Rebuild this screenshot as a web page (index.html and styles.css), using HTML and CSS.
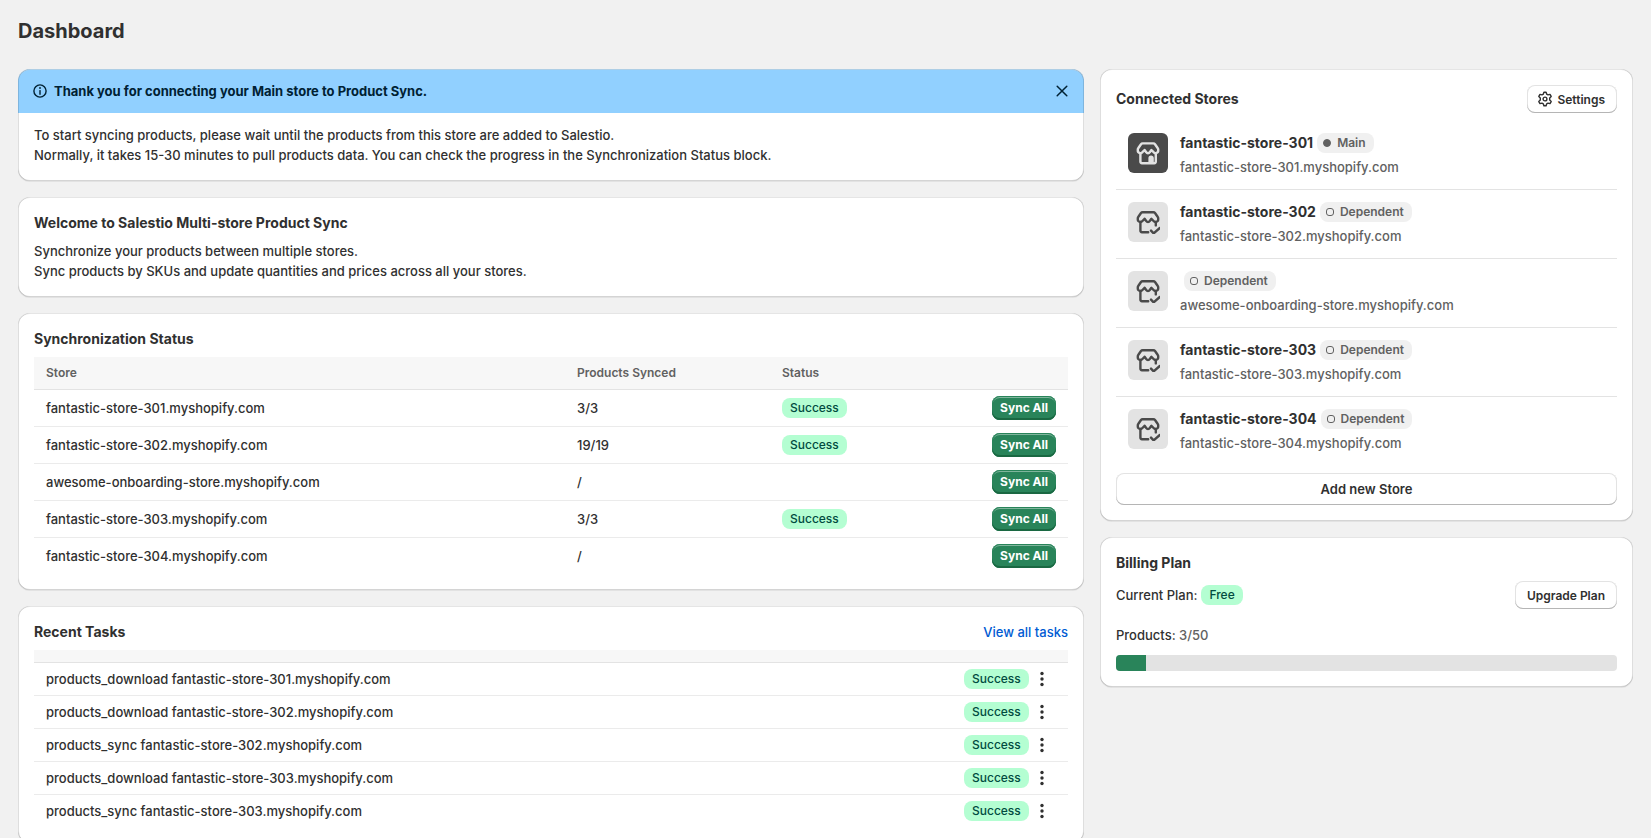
FILE: index.html
```html
<!DOCTYPE html>
<html lang="en">
<head>
    <meta charset="UTF-8">
    <meta name="viewport" content="width=device-width, initial-scale=1.0">
    <title>Dashboard</title>
    <link rel="stylesheet" href="styles.css">
</head>
<body>

<!-- Shared icons -->
<svg class="sprite" aria-hidden="true">
    <symbol id="icon-store" viewBox="0 0 24 24">
        <path d="M6.6 2.4h10.8a2 2 0 0 1 1.6.8l2.8 4a2 2 0 0 1 .4 1.2v.8a2.6 2.6 0 0 1-4.6 2L15.4 9l-1.6 2.2a2.1 2.1 0 0 1-3.6 0L8.6 9l-2.2 2.2a2.6 2.6 0 0 1-4.6-2v-.8a2 2 0 0 1 .4-1.2l2.8-4a2 2 0 0 1 1.6-.8z"/>
        <path d="M4.4 12.4v8.2a1.6 1.6 0 0 0 1.6 1.6h12.2a1.6 1.6 0 0 0 1.6-1.6v-8.2"/>
        <path fill="currentColor" d="M13.6 21.6v-4.4a1.5 1.5 0 0 1 3 0v4.4z"/>
    </symbol>
    <symbol id="icon-store-check" viewBox="0 0 24 24">
        <path d="M6.6 2.2h10.8a2 2 0 0 1 1.6.8l2.8 4a2 2 0 0 1 .4 1.2V9a2.6 2.6 0 0 1-4.6 2l-2.2-2.2-1.6 2.2a2.1 2.1 0 0 1-3.6 0L8.6 8.8 6.4 11a2.6 2.6 0 0 1-4.6-2v-.8A2 2 0 0 1 2.2 7L5 3a2 2 0 0 1 1.6-.8z"/>
        <path d="M4.4 12v8.6A1.6 1.6 0 0 0 6 22.2h6.2M19.8 12v3.4M15 20.6l2.6 2.8 6.2-5.4"/>
    </symbol>
    <symbol id="icon-dots" viewBox="0 0 20 20">
        <circle cx="10" cy="4.5" r="1.7"/>
        <circle cx="10" cy="10" r="1.7"/>
        <circle cx="10" cy="15.5" r="1.7"/>
    </symbol>
</svg>

<h1>Dashboard</h1>

<main class="layout">
    <div class="column">
        <section class="card banner">
            <div class="banner-header">
                <svg class="icon-info" viewBox="0 0 16 16" aria-hidden="true">
                    <circle cx="8" cy="8" r="6.1"/>
                    <path d="M8 7.6v3.6"/>
                    <circle class="dot" cx="8" cy="5" r=".9"/>
                </svg>
                <h2>Thank you for connecting your Main store to Product Sync.</h2>
                <button class="close" aria-label="Dismiss">
                    <svg viewBox="0 0 16 16" aria-hidden="true"><path d="M3.2 3.2l9.6 9.6M12.8 3.2l-9.6 9.6"/></svg>
                </button>
            </div>
            <div class="banner-body">
                <p>To start syncing products, please wait until the products from this store are added to Salestio.</p>
                <p>Normally, it takes 15-30 minutes to pull products data. You can check the progress in the Synchronization Status block.</p>
            </div>
        </section>

        <section class="card">
            <h2>Welcome to Salestio Multi-store Product Sync</h2>
            <div>
                <p>Synchronize your products between multiple stores.</p>
                <p>Sync products by SKUs and update quantities and prices across all your stores.</p>
            </div>
        </section>

        <section class="card">
            <h2>Synchronization Status</h2>
            <table class="sync-table">
                <thead>
                    <tr>
                        <th>Store</th>
                        <th class="col-synced">Products Synced</th>
                        <th class="col-state">Status</th>
                        <th class="col-action"></th>
                    </tr>
                </thead>
                <tbody>
                    <tr>
                        <td>fantastic-store-301.myshopify.com</td>
                        <td>3/3</td>
                        <td><span class="badge success">Success</span></td>
                        <td class="action"><button class="btn-primary">Sync All</button></td>
                    </tr>
                    <tr>
                        <td>fantastic-store-302.myshopify.com</td>
                        <td>19/19</td>
                        <td><span class="badge success">Success</span></td>
                        <td class="action"><button class="btn-primary">Sync All</button></td>
                    </tr>
                    <tr>
                        <td>awesome-onboarding-store.myshopify.com</td>
                        <td>/</td>
                        <td></td>
                        <td class="action"><button class="btn-primary">Sync All</button></td>
                    </tr>
                    <tr>
                        <td>fantastic-store-303.myshopify.com</td>
                        <td>3/3</td>
                        <td><span class="badge success">Success</span></td>
                        <td class="action"><button class="btn-primary">Sync All</button></td>
                    </tr>
                    <tr>
                        <td>fantastic-store-304.myshopify.com</td>
                        <td>/</td>
                        <td></td>
                        <td class="action"><button class="btn-primary">Sync All</button></td>
                    </tr>
                </tbody>
            </table>
        </section>

        <section class="card">
            <div class="card-header">
                <h2>Recent Tasks</h2>
                <a href="#">View all tasks</a>
            </div>
            <table class="task-table">
                <thead>
                    <tr>
                        <th></th>
                        <th class="col-status"></th>
                        <th class="col-menu"></th>
                    </tr>
                </thead>
                <tbody>
                    <tr>
                        <td>products_download fantastic-store-301.myshopify.com</td>
                        <td><span class="badge success">Success</span></td>
                        <td><button class="menu" aria-label="Task actions"><svg><use href="#icon-dots"/></svg></button></td>
                    </tr>
                    <tr>
                        <td>products_download fantastic-store-302.myshopify.com</td>
                        <td><span class="badge success">Success</span></td>
                        <td><button class="menu" aria-label="Task actions"><svg><use href="#icon-dots"/></svg></button></td>
                    </tr>
                    <tr>
                        <td>products_sync fantastic-store-302.myshopify.com</td>
                        <td><span class="badge success">Success</span></td>
                        <td><button class="menu" aria-label="Task actions"><svg><use href="#icon-dots"/></svg></button></td>
                    </tr>
                    <tr>
                        <td>products_download fantastic-store-303.myshopify.com</td>
                        <td><span class="badge success">Success</span></td>
                        <td><button class="menu" aria-label="Task actions"><svg><use href="#icon-dots"/></svg></button></td>
                    </tr>
                    <tr>
                        <td>products_sync fantastic-store-303.myshopify.com</td>
                        <td><span class="badge success">Success</span></td>
                        <td><button class="menu" aria-label="Task actions"><svg><use href="#icon-dots"/></svg></button></td>
                    </tr>
                </tbody>
            </table>
        </section>
    </div>

    <div class="column">
        <section class="card">
            <div class="card-header">
                <h2>Connected Stores</h2>
                <button class="btn btn-icon">
                    <svg class="icon-gear" viewBox="0 0 16 16" aria-hidden="true">
                        <path d="M6.9 1.2h2.2l.6 2 1.3.7 2-.5 1.2 2-1.5 1.5v2.2l1.5 1.5-1.2 2-2-.5-1.3.7-.6 2H6.9l-.6-2-1.3-.7-2 .5-1.2-2 1.5-1.5V6.9L1.8 5.4l1.2-2 2 .5 1.3-.7z"/>
                        <circle cx="8" cy="8" r="1.9"/>
                    </svg>
                    Settings
                </button>
            </div>
            <ul class="stores">
                <li>
                    <span class="thumb main"><svg><use href="#icon-store"/></svg></span>
                    <div class="store-info">
                        <div class="store-name"><strong>fantastic-store-301</strong><span class="badge role"><i class="pip full"></i>Main</span></div>
                        <p>fantastic-store-301.myshopify.com</p>
                    </div>
                </li>
                <li>
                    <span class="thumb"><svg><use href="#icon-store-check"/></svg></span>
                    <div class="store-info">
                        <div class="store-name"><strong>fantastic-store-302</strong><span class="badge role"><i class="pip"></i>Dependent</span></div>
                        <p>fantastic-store-302.myshopify.com</p>
                    </div>
                </li>
                <li>
                    <span class="thumb"><svg><use href="#icon-store-check"/></svg></span>
                    <div class="store-info">
                        <div class="store-name"><strong></strong><span class="badge role"><i class="pip"></i>Dependent</span></div>
                        <p>awesome-onboarding-store.myshopify.com</p>
                    </div>
                </li>
                <li>
                    <span class="thumb"><svg><use href="#icon-store-check"/></svg></span>
                    <div class="store-info">
                        <div class="store-name"><strong>fantastic-store-303</strong><span class="badge role"><i class="pip"></i>Dependent</span></div>
                        <p>fantastic-store-303.myshopify.com</p>
                    </div>
                </li>
                <li>
                    <span class="thumb"><svg><use href="#icon-store-check"/></svg></span>
                    <div class="store-info">
                        <div class="store-name"><strong>fantastic-store-304</strong><span class="badge role"><i class="pip"></i>Dependent</span></div>
                        <p>fantastic-store-304.myshopify.com</p>
                    </div>
                </li>
            </ul>
            <button class="btn btn-wide">Add new Store</button>
        </section>

        <section class="card">
            <h2>Billing Plan</h2>
            <div class="card-header">
                <p class="plan">Current Plan: <span class="badge success">Free</span></p>
                <button class="btn">Upgrade Plan</button>
            </div>
            <div class="usage">
                <p>Products: <span class="subdued">3/50</span></p>
                <div class="progress" role="progressbar" aria-label="Products" aria-valuenow="3" aria-valuemax="50">
                    <div class="progress-fill" style="width: 6%"></div>
                </div>
            </div>
        </section>
    </div>
</main>

</body>
</html>
```
FILE: styles.css
```css
* {
    box-sizing: border-box;
}

body {
    margin: 0;
    padding: 19px 18px;
    background-color: #f1f1f1;
    color: #303030;
    font-family: Inter, "Liberation Sans", sans-serif;
    font-size: 13px;
    font-weight: 450;
    line-height: 20px;
}

h1, h2, p, ul {
    margin: 0;
    padding: 0;
}

h1 {
    margin-bottom: 26px;
    font-size: 20px;
    font-weight: 650;
    line-height: 24px;
}

h2 {
    font-size: 14px;
    font-weight: 700;
}

a {
    color: #005bd3;
    text-decoration: none;
}

button {
    padding: 0;
    border: none;
    background: none;
    color: inherit;
    font-family: inherit;
    cursor: pointer;
}

svg {
    display: block;
    fill: none;
    stroke: currentColor;
    stroke-linecap: round;
    stroke-linejoin: round;
}

.sprite {
    position: absolute;
    width: 0;
    height: 0;
}

.layout {
    display: grid;
    grid-template-columns: 2fr 1fr;
    gap: 16px;
    align-items: start;
}

.column {
    display: flex;
    flex-direction: column;
    gap: 16px;
}

/* Cards */
.card {
    display: flex;
    flex-direction: column;
    gap: 8px;
    position: relative;
    padding: 16px;
    border-radius: 12px;
    background-color: #fff;
    box-shadow: 0 1px 0 rgba(26, 26, 26, 0.07);
}

/* Bevel drawn over the card's own edge */
.card::after {
    content: "";
    position: absolute;
    inset: 0;
    border-radius: 12px;
    box-shadow: inset 1px 0 0 rgba(0, 0, 0, 0.13), inset -1px 0 0 rgba(0, 0, 0, 0.13),
        inset 0 -1px 0 rgba(0, 0, 0, 0.17), inset 0 1px 0 rgba(204, 204, 204, 0.5);
    pointer-events: none;
}

.card-header {
    display: flex;
    justify-content: space-between;
    align-items: center;
}

/* Banner */
.banner {
    gap: 0;
    padding: 0;
}

.banner-header {
    display: flex;
    align-items: center;
    gap: 4px;
    padding: 12px;
    border-radius: 12px 12px 0 0;
    background-color: #91d0ff;
    color: #002133;
}

.banner-header h2 {
    flex: 1;
    font-size: 13px;
    font-weight: 650;
}

.icon-info {
    width: 20px;
    height: 16px;
    stroke-width: 1.4;
}

.icon-info .dot {
    fill: currentColor;
    stroke: none;
}

.close {
    width: 20px;
    padding: 2px;
}

.close svg {
    width: 16px;
    height: 16px;
    stroke-width: 1.5;
}

.banner-body {
    padding: 12px 16px 16px;
}

/* Tables */
table {
    width: 100%;
    border-collapse: separate;
    border-spacing: 0;
    table-layout: fixed;
}

th {
    padding: 6px 12px;
    border-bottom: 1px solid #e3e3e3;
    background-color: #f7f7f7;
    color: #616161;
    font-size: 12px;
    font-weight: 600;
    text-align: left;
}

td {
    padding: 6px 12px;
    border-bottom: 1px solid #ebebeb;
}

.sync-table th {
    height: 33px;
}

.sync-table td {
    height: 37px;
}

.sync-table tr:last-child td {
    height: 36px;
}

.sync-table .col-synced {
    width: 205px;
}

.sync-table .col-state {
    width: 210px;
}

.sync-table .col-action {
    width: 88px;
}

.action .btn-primary {
    margin-left: auto;
}

.task-table th {
    height: 13px;
}

.task-table td {
    height: 33px;
}

.task-table .col-status {
    width: 76px;
}

.task-table .col-menu {
    width: 40px;
}

.task-table td:nth-child(2) {
    padding-right: 0;
}

/* padding of both cells adds up to the gap before the dots */
.task-table td:nth-child(2) {
    padding-left: 12px;
}

.task-table td:last-child {
    padding: 6px 0 6px 4px;
}

.task-table tr:last-child td {
    height: 32px;
}

tbody tr:last-child td {
    border-bottom: none;
}

.menu {
    display: block;
}

.menu svg {
    width: 20px;
    height: 20px;
    fill: #303030;
    stroke: none;
}

/* Badges */
.badge {
    display: flex;
    align-items: center;
    width: max-content;
    height: 20px;
    padding: 0 8px;
    border-radius: 8px;
    background-color: #f0f0f0;
    color: #616161;
    font-size: 12px;
    font-weight: 600;
}

.badge.success {
    background-color: #b4fed2;
    color: #014b40;
    font-weight: 450;
}

.badge.role {
    padding-left: 6px;
}

.pip {
    width: 8px;
    height: 8px;
    margin-right: 6px;
    border: 1px solid #616161;
    border-radius: 3px;
}

.pip.full {
    border-radius: 4px;
    background-color: #616161;
}

/* Buttons */
.btn {
    display: flex;
    justify-content: center;
    align-items: center;
    gap: 4px;
    height: 28px;
    padding: 0 12px;
    border-radius: 8px;
    background-color: #fff;
    box-shadow: inset 0 -1px 0 #b5b5b5, inset 0 0 0 1px #e3e3e3;
    font-size: 12px;
    font-weight: 600;
}

.btn-icon {
    padding-left: 10px;
}

.btn-wide {
    height: 32px;
    width: 100%;
    font-size: 13px;
}

.btn-primary {
    display: block;
    height: 24px;
    padding: 0 8px 2px;
    border-radius: 8px;
    background-color: #29845a;
    box-shadow: inset 0 -2px 0 #1a6842, inset 0 0 0 1px #29845a, inset 0 2px 0 #7fb59c;
    color: #fff;
    font-size: 12px;
    font-weight: 700;
}

.icon-gear {
    width: 16px;
    height: 16px;
    stroke-width: 1.4;
}

/* Connected stores */
.stores {
    list-style: none;
}

.stores li {
    display: flex;
    gap: 12px;
    padding: 12px;
}

.stores li + li {
    border-top: 1px solid #e3e3e3;
}

.thumb {
    display: flex;
    justify-content: center;
    align-items: center;
    width: 40px;
    height: 40px;
    border-radius: 6px;
    background-color: #e3e3e3;
    color: #4a4a4a;
}

.thumb.main {
    background-color: #4a4a4a;
    color: #e3e3e3;
}

.thumb svg {
    width: 24px;
    height: 24px;
    stroke-width: 2.4;
}

.thumb symbol {
    overflow: visible;
}

.store-info {
    display: flex;
    flex-direction: column;
    gap: 4px;
}

.store-name {
    display: flex;
    align-items: center;
    gap: 4px;
}

.store-name strong {
    font-size: 14px;
    font-weight: 700;
}

.store-info p, .subdued {
    color: #616161;
}

/* Billing */
.plan {
    display: flex;
    align-items: center;
    gap: 4px;
}

.usage {
    display: flex;
    flex-direction: column;
    gap: 10px;
    margin-top: 8px;
}

.progress {
    height: 16px;
    border-radius: 4px;
    background-color: #e3e3e3;
    overflow: hidden;
}

.progress-fill {
    height: 100%;
    background-color: #29845a;
}
```
